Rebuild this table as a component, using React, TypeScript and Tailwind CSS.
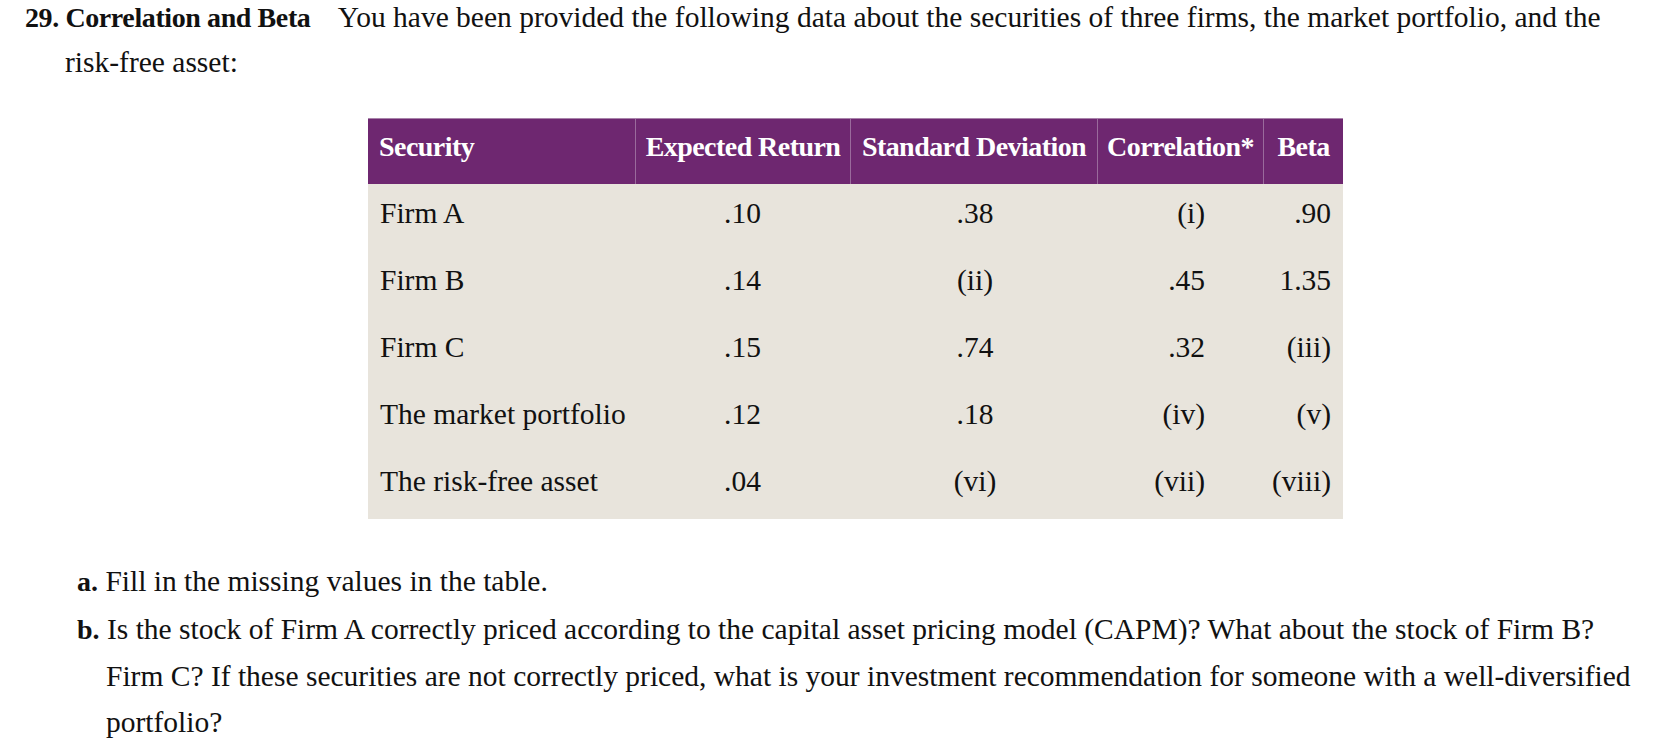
import React from 'react';

const rows: string[][] = [
  ['Firm A', '.10', '.38', '(i)', '.90'],
  ['Firm B', '.14', '(ii)', '.45', '1.35'],
  ['Firm C', '.15', '.74', '.32', '(iii)'],
  ['The market portfolio', '.12', '.18', '(iv)', '(v)'],
  ['The risk-free asset', '.04', '(vi)', '(vii)', '(viii)'],
];

// header cells: label + alignment
const headers = [
  { label: 'Security', cls: 'justify-start pl-[11px]' },
  { label: 'Expected Return', cls: 'justify-center' },
  { label: 'Standard Deviation', cls: 'justify-center' },
  { label: 'Correlation*', cls: 'justify-center' },
  { label: 'Beta', cls: 'justify-center' },
];

const cellAlign = [
  'text-left pl-[12px]',
  'text-center',
  'text-center pl-[3px]',
  'text-right pr-[58px]',
  'text-right pr-[12px]',
];

export default function App() {
  return (
    <div className="min-h-screen w-full bg-white text-[#111] font-['Liberation_Serif','Times_New_Roman',serif] overflow-hidden">
      {/* Intro paragraph */}
      <p className="-mt-[5px] pl-[65px] -indent-[40px] text-[29.5px] leading-[45px]">
        <span className="font-bold text-[28px] tracking-[-0.4px]">29. Correlation and Beta</span>{' '}
        <span className="ml-[20px]">
          You have been provided the following data about the securities of three firms, the market portfolio, and the
        </span>
        <br />
        risk-free asset:
      </p>

      {/* Data table */}
      <div className="ml-[368px] mt-[33px] w-[975px]">
        <div className="grid grid-cols-[267px_215px_247px_166px_80px] h-[66px] bg-[#6e2770] border-t border-[#a883aa] text-white">
          {headers.map((h, i) => (
            <div
              key={h.label}
              className={`flex items-start pt-[12px] font-bold text-[28px] tracking-[-0.55px] leading-[32px] whitespace-nowrap ${h.cls} ${i > 0 ? 'border-l border-[#9a6a9c]' : ''}`}
            >
              {h.label}
            </div>
          ))}
        </div>
        <div className="bg-[#e8e4dc]">
          {rows.map((r) => (
            <div key={r[0]} className="grid grid-cols-[267px_215px_247px_166px_80px] h-[67px] pt-[11px] text-[29.5px] leading-[36px]">
              {r.map((c, i) => (
                <div key={i} className={`whitespace-nowrap ${cellAlign[i]}`}>
                  {c}
                </div>
              ))}
            </div>
          ))}
        </div>
      </div>

      {/* Questions */}
      <div className="mt-[39px] text-[29.5px] leading-[46px]">
        <p className="pl-[106px] -indent-[29px]">
          <span className="font-bold text-[28px]">a.</span> Fill in the missing values in the table.
        </p>
        <p className="mt-[1px] pl-[106px] -indent-[29px]">
          <span className="font-bold text-[28px]">b.</span> Is the stock of Firm A correctly priced according to the capital asset pricing model (CAPM)? What about the stock of Firm B?
          <br />
          Firm C? If these securities are not correctly priced, what is your investment recommendation for someone with a well-diversified
          <br />
          portfolio?
        </p>
      </div>
    </div>
  );
}
